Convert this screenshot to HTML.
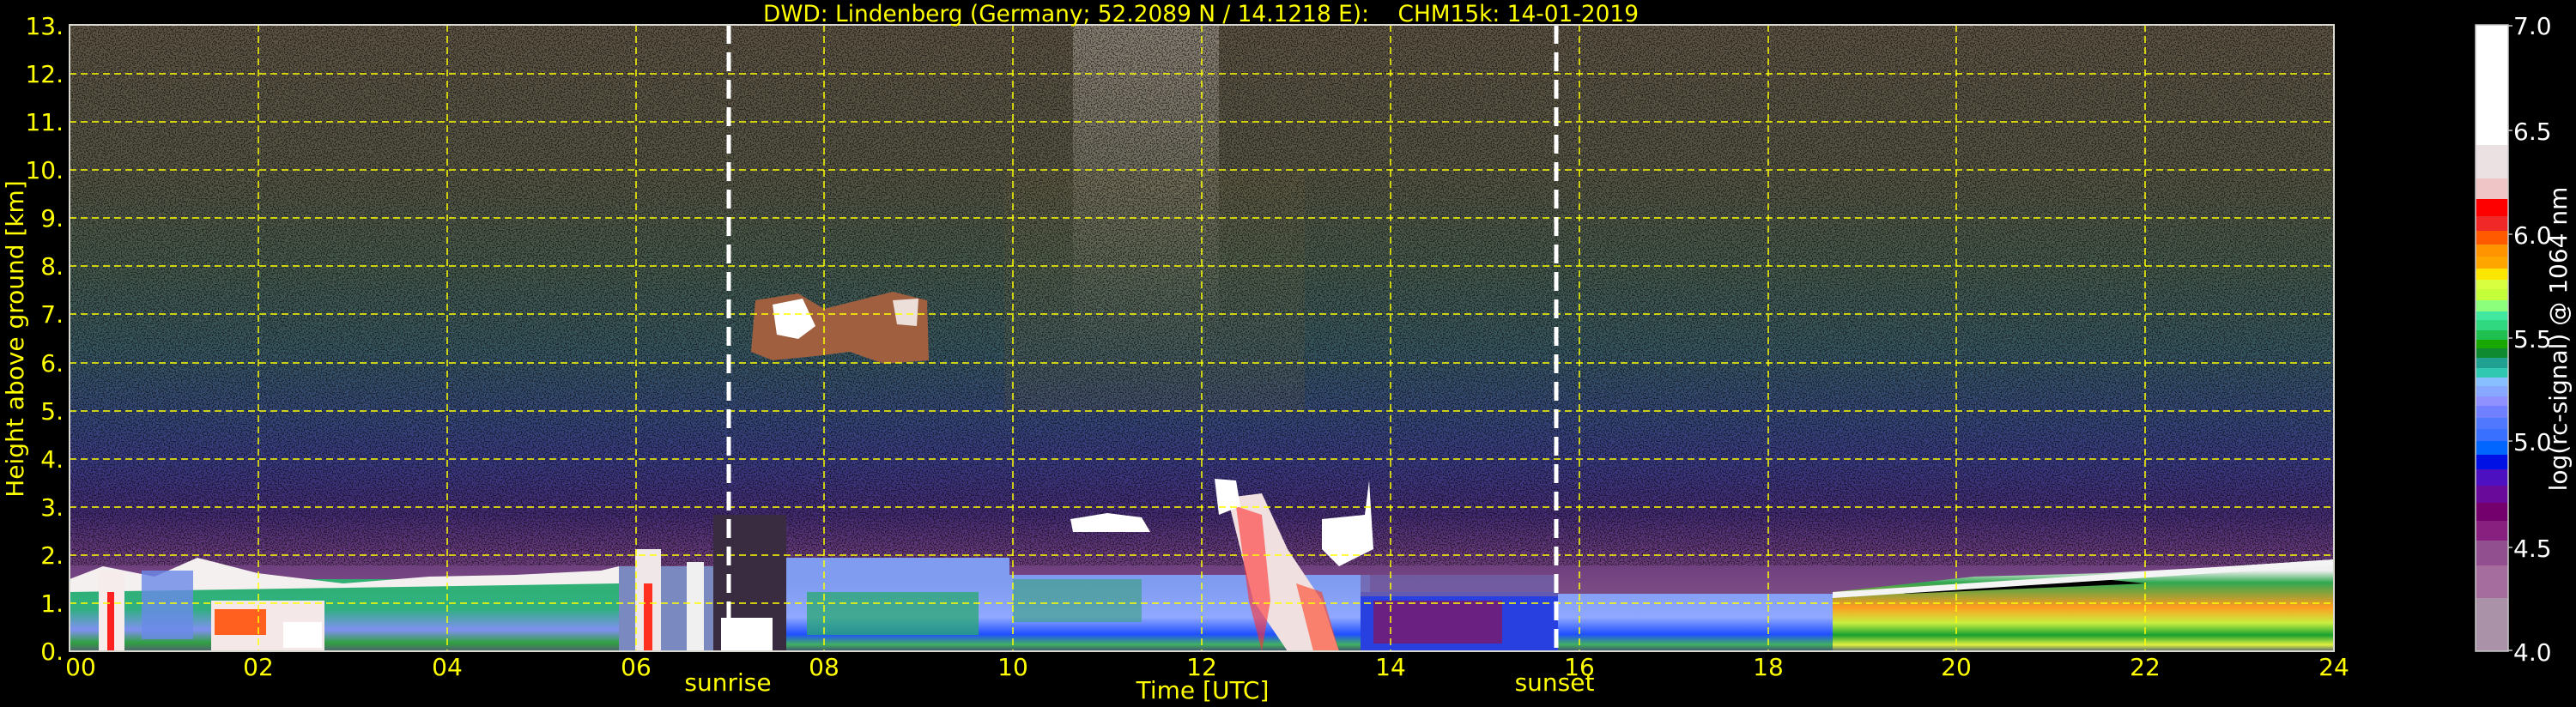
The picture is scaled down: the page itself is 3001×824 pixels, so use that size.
<!DOCTYPE html>
<html><head><meta charset="utf-8"><style>
html,body{margin:0;padding:0;background:#000;}
svg{display:block;}
text{font-family:"DejaVu Sans","Liberation Sans",sans-serif;}
</style></head><body>
<svg width="3001" height="824" viewBox="0 0 3001 824" xmlns="http://www.w3.org/2000/svg">
<defs>
<linearGradient id="bg" x1="0" y1="29" x2="0" y2="759" gradientUnits="userSpaceOnUse">
<stop offset="0" stop-color="#5e5444"/>
<stop offset="0.25" stop-color="#555544"/>
<stop offset="0.38" stop-color="#46594c"/>
<stop offset="0.52" stop-color="#375660"/>
<stop offset="0.62" stop-color="#354878"/>
<stop offset="0.7" stop-color="#3a3a82"/>
<stop offset="0.78" stop-color="#442c74"/>
<stop offset="0.85" stop-color="#6a3c7c"/>
<stop offset="0.9" stop-color="#7a4a84"/>
<stop offset="1" stop-color="#7a4a84"/>
</linearGradient>
<linearGradient id="pbl" x1="0" y1="680" x2="0" y2="759" gradientUnits="userSpaceOnUse">
<stop offset="0" stop-color="#7f9cf0"/>
<stop offset="0.5" stop-color="#90a8ff"/>
<stop offset="0.75" stop-color="#2050ff"/>
<stop offset="0.9" stop-color="#40b060"/>
<stop offset="1" stop-color="#405070"/>
</linearGradient>
<linearGradient id="grn" x1="0" y1="660" x2="0" y2="759" gradientUnits="userSpaceOnUse">
<stop offset="0" stop-color="#e8e8ee"/>
<stop offset="0.12" stop-color="#30b070"/>
<stop offset="0.5" stop-color="#30b080"/>
<stop offset="0.75" stop-color="#8090f0"/>
<stop offset="0.9" stop-color="#30a040"/>
<stop offset="1" stop-color="#506070"/>
</linearGradient>
<linearGradient id="eve" x1="0" y1="665" x2="0" y2="759" gradientUnits="userSpaceOnUse">
<stop offset="0" stop-color="#f0f0f0"/>
<stop offset="0.15" stop-color="#30a850"/>
<stop offset="0.45" stop-color="#ff9a20"/>
<stop offset="0.65" stop-color="#c8f040"/>
<stop offset="0.8" stop-color="#18a030"/>
<stop offset="0.92" stop-color="#e0f040"/>
<stop offset="1" stop-color="#506070"/>
</linearGradient>
<linearGradient id="cw" x1="0" y1="29" x2="0" y2="420" gradientUnits="userSpaceOnUse">
<stop offset="0" stop-color="#c0b8b0" stop-opacity="0.45"/>
<stop offset="1" stop-color="#c0b8b0" stop-opacity="0"/>
</linearGradient>
<filter id="spk" x="0" y="0" width="100%" height="100%">
<feTurbulence type="fractalNoise" baseFrequency="0.7" numOctaves="1" seed="3"/>
<feColorMatrix type="matrix" values="0 0 0 0 0  0 0 0 0 0  0 0 0 0 0  0 0 0 -9 4.6"/>
</filter>
</defs>

<rect x="81" y="29" width="2638" height="730" fill="url(#bg)"/>
<rect x="1250" y="29" width="170" height="400" fill="url(#cw)"/>
<rect x="1170" y="200" width="350" height="280" fill="#7a6a40" opacity="0.2"/>
<rect x="81" y="29" width="2638" height="630" filter="url(#spk)" opacity="0.55"/>

<rect x="81" y="675" width="640" height="84" fill="url(#grn)"/>
<path d="M81 675 L120 660 L180 672 L230 650 L300 668 L400 680 L500 672 L600 670 L700 665 L721 660 L721 680 L81 690Z" fill="#f4f0f0"/>
<rect x="115" y="665" width="30" height="94" fill="#f6ecec"/>
<rect x="125" y="690" width="8" height="69" fill="#ff2020"/>
<rect x="246" y="700" width="132" height="59" fill="#f5e8e8"/>
<rect x="250" y="710" width="60" height="30" fill="#ff6020"/>
<rect x="330" y="725" width="45" height="30" fill="#ffffff"/>
<rect x="165" y="665" width="60" height="80" fill="#6a8ae8" opacity="0.8"/>
<rect x="721" y="660" width="110" height="99" fill="#7a8ac0"/>
<rect x="740" y="640" width="30" height="119" fill="#f0e8e8"/>
<rect x="750" y="680" width="10" height="79" fill="#ff3020"/>
<rect x="800" y="655" width="20" height="104" fill="#f0f0f0"/>
<rect x="831" y="600" width="85" height="159" fill="#3a2c40"/>
<rect x="840" y="720" width="60" height="39" fill="#ffffff"/>
<rect x="916" y="650" width="260" height="109" fill="url(#pbl)"/>
<rect x="940" y="690" width="200" height="50" fill="#28a870" opacity="0.75"/>
<rect x="1176" y="670" width="230" height="89" fill="url(#pbl)"/>
<rect x="1180" y="675" width="150" height="50" fill="#30a070" opacity="0.55"/>
<rect x="1406" y="670" width="190" height="89" fill="url(#pbl)"/>
<path d="M1430 580 L1470 575 L1500 640 L1540 700 L1560 759 L1500 759 L1460 700 Z" fill="#f0e0e0"/>
<path d="M1440 590 L1470 600 L1480 700 L1470 759 L1455 700 Z" fill="#ff3030" opacity="0.6"/>
<path d="M1510 680 L1540 690 L1560 759 L1530 759 Z" fill="#ff4020" opacity="0.6"/>
<rect x="1585" y="690" width="230" height="69" fill="#2840e0"/>
<rect x="1600" y="700" width="150" height="50" fill="#6a2080"/>
<rect x="1585" y="670" width="230" height="25" fill="#7060a8" opacity="0.8"/>
<rect x="1815" y="692" width="320" height="67" fill="url(#pbl)"/>
<path d="M2135 690 L2300 672 L2450 668 L2600 660 L2719 652 L2719 759 L2135 759 Z" fill="url(#eve)"/>
<path d="M2200 688 L2450 675 L2500 680 L2220 692 Z" fill="#000"/>
<path d="M2135 690 L2719 652 L2719 659 L2135 697 Z" fill="#f4f4f4"/>

<path d="M880 350 L930 342 L960 360 L1000 350 L1040 340 L1080 350 L1082 420 L1030 424 L990 410 L950 415 L900 420 L875 410 Z" fill="#a06040"/>
<path d="M900 355 L935 348 L950 380 L930 395 L905 390 Z" fill="#fff"/>
<path d="M1040 350 L1070 348 L1068 380 L1045 378 Z" fill="#fff" opacity="0.8"/>
<path d="M1247 605 L1290 598 L1330 603 L1340 620 L1250 620 Z" fill="#fff"/>
<path d="M1415 558 L1440 560 L1445 590 L1420 600 Z" fill="#fff"/>
<path d="M1540 605 L1590 600 L1595 560 L1600 640 L1560 660 L1540 640 Z" fill="#fff"/>

<g stroke="#ffff00" stroke-width="1.5" stroke-dasharray="8,5" fill="none">
<path d="M81 703H2719M81 647H2719M81 591H2719M81 535H2719M81 479H2719M81 423H2719M81 366H2719M81 310H2719M81 254H2719M81 198H2719M81 142H2719M81 86H2719"/>
<path d="M301 29V759M521 29V759M741 29V759M960 29V759M1180 29V759M1400 29V759M1620 29V759M1840 29V759M2060 29V759M2279 29V759M2499 29V759"/>
</g>
<g stroke="#ffffff" stroke-width="5" stroke-dasharray="22,10">
<path d="M849 29V759"/><path d="M1813 29V759"/>
</g>
<rect x="81" y="29" width="2638" height="730" fill="none" stroke="#d8d8d0" stroke-width="2"/>

<text x="889" y="25" font-size="27" fill="#ffff00" textLength="1020" lengthAdjust="spacingAndGlyphs" xml:space="preserve">DWD: Lindenberg (Germany; 52.2089 N / 14.1218 E):&#160;&#160;&#160;&#160;CHM15k: 14-01-2019</text>

<g font-size="28" fill="#ffff00" text-anchor="end">
<text x="74" y="769">0.</text><text x="74" y="713">1.</text><text x="74" y="657">2.</text><text x="74" y="601">3.</text><text x="74" y="545">4.</text><text x="74" y="489">5.</text><text x="74" y="433">6.</text><text x="74" y="376">7.</text><text x="74" y="320">8.</text><text x="74" y="264">9.</text><text x="74" y="208">10.</text><text x="74" y="152">11.</text><text x="74" y="96">12.</text><text x="74" y="40">13.</text>
</g>
<text transform="translate(27,395) rotate(-90)" font-size="28" fill="#ffff00" text-anchor="middle">Height above ground [km]</text>

<g font-size="28" fill="#ffff00" text-anchor="middle">
<text x="94" y="787">00</text><text x="301" y="787">02</text><text x="521" y="787">04</text><text x="741" y="787">06</text><text x="960" y="787">08</text><text x="1180" y="787">10</text><text x="1400" y="787">12</text><text x="1620" y="787">14</text><text x="1840" y="787">16</text><text x="2060" y="787">18</text><text x="2279" y="787">20</text><text x="2499" y="787">22</text><text x="2719" y="787">24</text>
<text x="1401" y="814">Time [UTC]</text>
<text x="848" y="805">sunrise</text>
<text x="1811" y="805">sunset</text>
</g>

<g>
<rect x="2884" y="29" width="38" height="140" fill="#ffffff"/>
<rect x="2884" y="169" width="38" height="39" fill="#ebe1e3"/>
<rect x="2884" y="208" width="38" height="24" fill="#efc5c6"/>
<rect x="2884" y="232" width="38" height="20" fill="#ff0000"/>
<rect x="2884" y="252" width="38" height="17" fill="#f02828"/>
<rect x="2884" y="269" width="38" height="16" fill="#ff5a00"/>
<rect x="2884" y="285" width="38" height="14" fill="#ff9400"/>
<rect x="2884" y="299" width="38" height="14" fill="#ffa500"/>
<rect x="2884" y="313" width="38" height="13" fill="#ffe600"/>
<rect x="2884" y="326" width="38" height="11" fill="#d8ff40"/>
<rect x="2884" y="337" width="38" height="13" fill="#c4ff3a"/>
<rect x="2884" y="350" width="38" height="13" fill="#8cff7c"/>
<rect x="2884" y="363" width="38" height="10" fill="#40e8a0"/>
<rect x="2884" y="373" width="38" height="12" fill="#30d880"/>
<rect x="2884" y="385" width="38" height="11" fill="#20c050"/>
<rect x="2884" y="396" width="38" height="10" fill="#18a800"/>
<rect x="2884" y="406" width="38" height="11" fill="#108a30"/>
<rect x="2884" y="417" width="38" height="12" fill="#20a090"/>
<rect x="2884" y="429" width="38" height="11" fill="#30c8b0"/>
<rect x="2884" y="440" width="38" height="10" fill="#88c0ff"/>
<rect x="2884" y="450" width="38" height="12" fill="#88a8ff"/>
<rect x="2884" y="462" width="38" height="11" fill="#9090ff"/>
<rect x="2884" y="473" width="38" height="14" fill="#7080ff"/>
<rect x="2884" y="487" width="38" height="13" fill="#5078ff"/>
<rect x="2884" y="500" width="38" height="14" fill="#3a70ff"/>
<rect x="2884" y="514" width="38" height="16" fill="#0066ff"/>
<rect x="2884" y="530" width="38" height="17" fill="#0011e6"/>
<rect x="2884" y="547" width="38" height="19" fill="#4c10c0"/>
<rect x="2884" y="566" width="38" height="20" fill="#6a0a9a"/>
<rect x="2884" y="586" width="38" height="21" fill="#74006e"/>
<rect x="2884" y="607" width="38" height="23" fill="#88207f"/>
<rect x="2884" y="630" width="38" height="29" fill="#924f90"/>
<rect x="2884" y="659" width="38" height="38" fill="#a46d9e"/>
<rect x="2884" y="697" width="38" height="62" fill="#aa92a8"/>
<rect x="2884" y="29" width="38" height="730" fill="none" stroke="#c8c8c8" stroke-width="1.5"/>
<g stroke="#c8c8c8" stroke-width="1.5"><path d="M2922 30h5M2922 152h5M2922 273h5M2922 394h5M2922 514h5M2922 638h5M2922 758h5"/></g>
<g font-size="28" fill="#ffffff">
<text x="2928" y="40">7.0</text><text x="2928" y="163">6.5</text><text x="2928" y="284">6.0</text><text x="2928" y="405">5.5</text><text x="2928" y="525">5.0</text><text x="2928" y="649">4.5</text><text x="2928" y="770">4.0</text>
</g>
<text transform="translate(2990,395) rotate(-90)" font-size="28" fill="#ffffff" text-anchor="middle">log(rc-signal) @ 1064 nm</text>
</g>
</svg>
</body></html>
